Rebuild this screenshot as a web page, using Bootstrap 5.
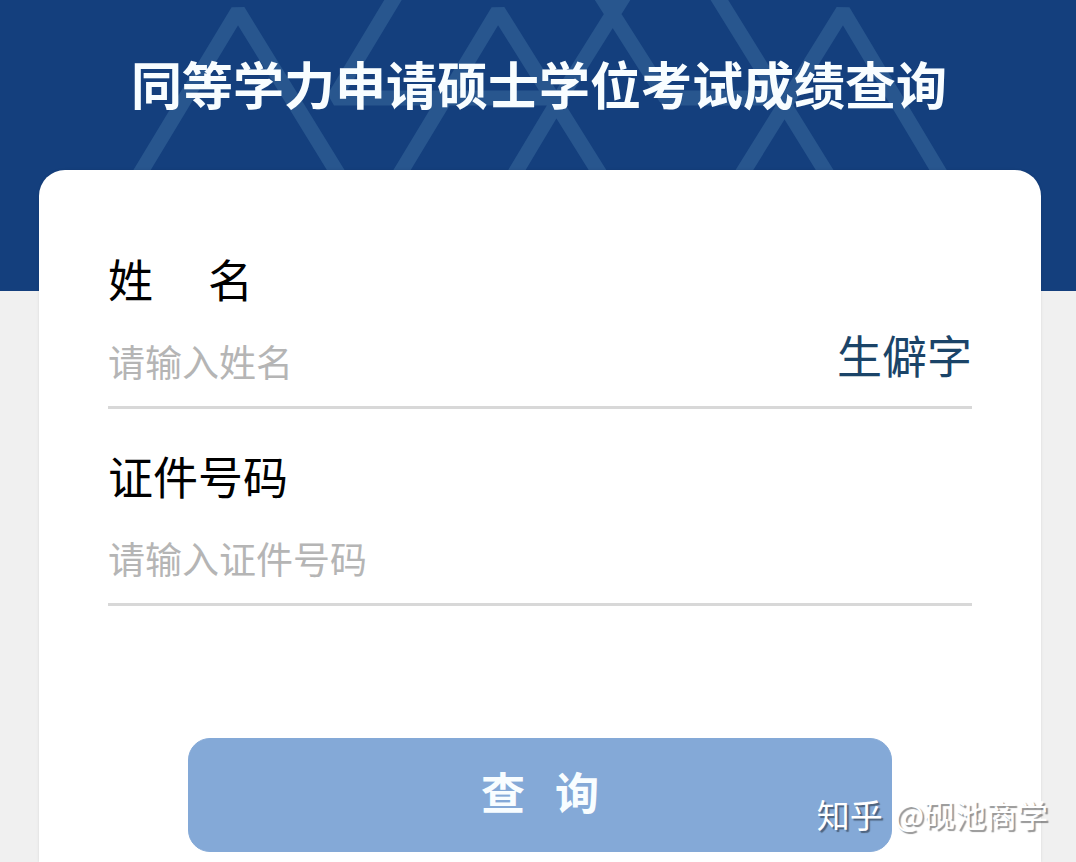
<!DOCTYPE html>
<html lang="zh-CN">
<head>
<meta charset="utf-8">
<meta name="viewport" content="width=device-width, initial-scale=1">
<title>同等学力申请硕士学位考试成绩查询</title>
<link href="https://cdn.jsdelivr.net/npm/bootstrap@5.3.0/dist/css/bootstrap.min.css" rel="stylesheet">
<style>
  body { background: #f0f0f0; color: #000; font-family: "Noto Sans CJK SC", sans-serif; }
  .hero { background: #143f7d; height: 291px; padding: 45px 0 0 2px; }
  .hero-pattern { fill: none; stroke: #28568e; stroke-width: 15px; }
  .hero-title { font-size: 51px; line-height: 76px; color: #f8fdff; }
  .query-panel { margin: -121px 35px 0 39px; padding: 76px 69px 10px; border-radius: 26px 26px 0 0; box-shadow: 0 0 3px rgba(0, 0, 0, .1); }
  .query-form { gap: 34px; }
  .field-label { font-size: 45px; line-height: 66px; margin-bottom: 2px; }
  .field-line { height: 95px; border-bottom: 3px solid #d8d8d8; }
  .field-input { font-size: 37px; line-height: 54px; padding: 2px 0 0; color: #000; min-width: 0; }
  .field-input::placeholder { color: #b5b5b5; opacity: 1; }
  .rare-link { font-size: 45px; line-height: 66px; color: #1b4468; padding-bottom: 10px; }
  .btn-query { margin: 98px 80px 0; padding: 0 0 8px; height: 114px; border-radius: 22px; font-size: 44px; line-height: 66px; --bs-btn-bg: #84a9d7; --bs-btn-color: #f8fdff; --bs-btn-border-color: #84a9d7; --bs-btn-hover-bg: #6f98cb; --bs-btn-hover-color: #fff; }
  .watermark { right: 28px; bottom: 24px; gap: 12px; line-height: 48px; color: #fff; text-shadow: 2px 2px 1px rgba(0, 0, 0, .42); }
  .watermark-site { font-size: 33px; }
  .watermark-user { font-size: 31px; }
</style>
</head>
<body>
<div class="position-relative min-vh-100 d-flex flex-column">
  <header class="hero position-relative text-center overflow-hidden">
    <svg class="hero-pattern position-absolute top-0 start-0 w-100 h-100" viewBox="0 0 1076 291" preserveAspectRatio="xMidYMin slice" aria-hidden="true">
      <path stroke-linejoin="bevel" d="M130 190 238 11 348 190M390 190 498 11 610 190M505 190 557 103 634-20M732 190 843 11 950 190M591-20 666 98H787M707-20 837 190M405-20 334 98H557"/>
    </svg>
    <h1 class="hero-title position-relative fw-bold m-0">同等学力申请硕士学位考试成绩查询</h1>
  </header>
  <main class="query-panel position-relative bg-white flex-grow-1">
    <form class="query-form d-flex flex-column">
      <div>
        <label class="field-label d-block" for="name">姓&#x3000;&nbsp;名</label>
        <div class="field-line d-flex align-items-center">
          <input class="field-input flex-grow-1 border-0 bg-transparent" id="name" type="text" placeholder="请输入姓名">
          <a class="rare-link text-decoration-none" href="#">生僻字</a>
        </div>
      </div>
      <div>
        <label class="field-label d-block" for="idno">证件号码</label>
        <div class="field-line d-flex align-items-center">
          <input class="field-input flex-grow-1 border-0 bg-transparent" id="idno" type="text" placeholder="请输入证件号码">
        </div>
      </div>
      <button class="btn btn-primary btn-query fw-bold" type="submit">查&nbsp;&nbsp;&nbsp;询</button>
    </form>
  </main>
  <div class="watermark position-absolute d-flex align-items-center">
    <span class="watermark-site">知乎</span>
    <span class="watermark-user">@砚池商学</span>
  </div>
</div>
<script src="https://cdn.jsdelivr.net/npm/bootstrap@5.3.0/dist/js/bootstrap.bundle.min.js"></script>
</body>
</html>
